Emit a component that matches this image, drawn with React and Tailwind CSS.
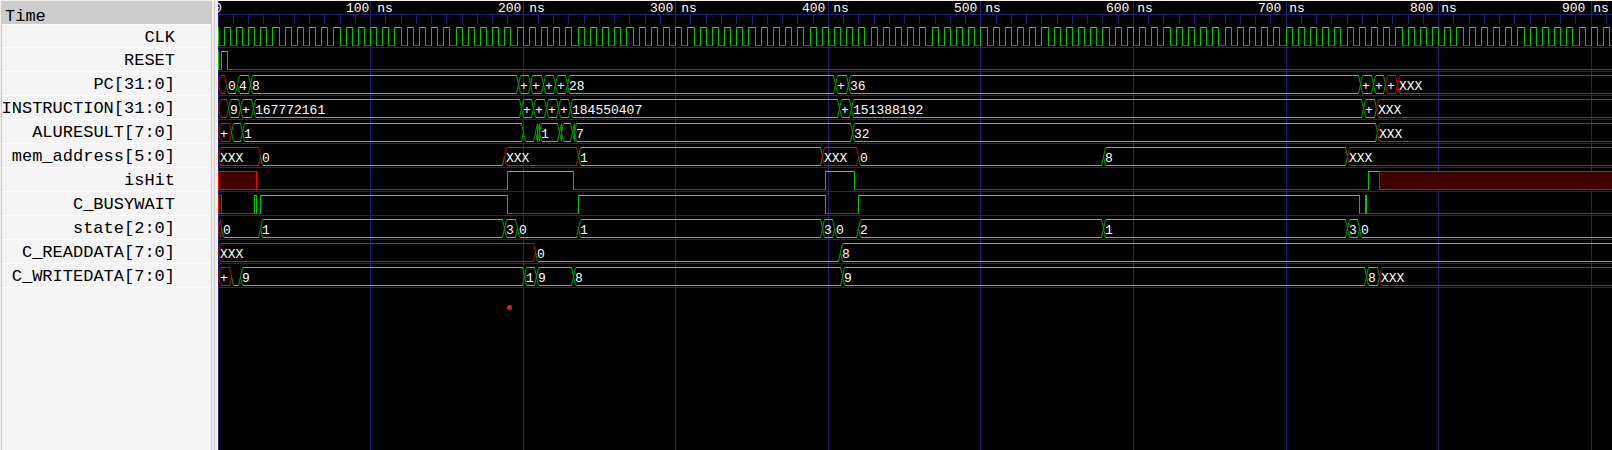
import React from "react";

const FAR = 4000;
const NS = 1.5258;
const EDGE = { g: "#00a000", r: "#d00000" };
const FLAT = { g: "#00ff00", r: "#ff0000" };
const GRID = "#202078";

// Each bus step: [x, value, label]; z = all bits zero, v = any value, x = unknown
const signals = [
  { name: "CLK", kind: "clock" },
  { name: "RESET", kind: "bit", steps: [[0, 1], [0, 0], [3, 1], [9, 0]] },
  {
    name: "PC[31:0]", kind: "bus",
    steps: [[0, "x"], [8, "z", "0"], [19, "v", "4"], [32, "v", "8"], [300, "v", "+"], [312, "v", "+"], [325, "v", "+"], [337, "v", "+"], [349, "v", "28"], [617, "v", "+"], [630, "v", "36"], [1142, "v", "+"], [1155, "v", "+"], [1167, "x", "+"], [1179, "x", "XXX"]],
  },
  {
    name: "INSTRUCTION[31:0]", kind: "bus",
    steps: [[0, "x"], [10, "v", "9"], [22, "v", "+"], [35, "v", "167772161"], [303, "v", "+"], [315, "v", "+"], [328, "v", "+"], [340, "v", "+"], [352, "v", "184550407"], [621, "v", "+"], [633, "v", "151388192"], [1145, "v", "+"], [1158, "x", "XXX"]],
  },
  {
    name: "ALURESULT[7:0]", kind: "bus",
    steps: [[0, "x", "+"], [13, "v"], [24, "v", "1"], [305, "z"], [317, "v"], [319, "v"], [321, "v", "1"], [341, "v"], [343, "v"], [354, "v"], [356, "v", "7"], [634, "v", "32"], [1159, "x", "XXX"]],
  },
  {
    name: "mem_address[5:0]", kind: "bus",
    steps: [[0, "x", "XXX"], [42, "z", "0"], [286, "x", "XXX"], [360, "v", "1"], [604, "x", "XXX"], [640, "z", "0"], [885, "v", "8"], [1129, "x", "XXX"]],
  },
  { name: "isHit", kind: "bit", steps: [[0, "x"], [38, 0], [289, 1], [355, 0], [607, 1], [636, 0], [1150, 1], [1161, "x"]] },
  { name: "C_BUSYWAIT", kind: "bit", steps: [[0, "x"], [3, 0], [36, 1], [38, 0], [42, 1], [289, 0], [360, 1], [607, 0], [640, 1], [1141, 0], [1147, 1], [1148, 0]] },
  {
    name: "state[2:0]", kind: "bus",
    steps: [[0, "x"], [3, "z", "0"], [42, "v", "1"], [286, "v", "3"], [299, "z", "0"], [360, "v", "1"], [604, "v", "3"], [616, "z", "0"], [640, "v", "2"], [885, "v", "1"], [1129, "v", "3"], [1141, "z", "0"]],
  },
  { name: "C_READDATA[7:0]", kind: "bus", steps: [[0, "x", "XXX"], [317, "z", "0"], [622, "v", "8"]] },
  {
    name: "C_WRITEDATA[7:0]", kind: "bus",
    steps: [[0, "x", "+"], [13, "z"], [22, "v", "9"], [306, "v", "1"], [318, "v", "9"], [355, "v", "8"], [624, "v", "9"], [1148, "v", "8"], [1161, "x", "XXX"]],
  },
];

function Line({ x1, y1, x2, y2, color, soft }) {
  return <line x1={x1} y1={y1} x2={x2} y2={y2} stroke={color} shapeRendering={soft ? "auto" : "crispEdges"} />;
}

const TOP = 3.5;
const MID = 12.5;
const BOTTOM = 21.5;

function BitWave({ steps }) {
  return steps.map(([from, value], i) => {
    const x = from + 0.5;
    const end = (i + 1 < steps.length ? steps[i + 1][0] : FAR) + 0.5;
    if (value === "x") {
      const fill = end - x > 5 ? "#400000" : "none";
      return <rect key={i} x={x} y={TOP} width={end - x} height={18} fill={fill} stroke="#ff0000" shapeRendering="crispEdges" />;
    }
    const y = value ? TOP : BOTTOM;
    const afterUnknown = i > 0 && steps[i - 1][1] === "x";
    return (
      <g key={i}>
        <Line x1={x} y1={y} x2={end} y2={y} color={value ? "#00ff00" : "#008000"} />
        {!afterUnknown && <Line x1={x} y1={3} x2={x} y2={22} color="#00c800" />}
      </g>
    );
  });
}

function ClockWave() {
  const steps = [[0, 0]];
  for (let t = 4; t * NS < FAR; t += 4) {
    steps.push([Math.floor(t * NS), (t / 4) % 2]);
  }
  return <BitWave steps={steps} />;
}

function BusWave({ steps }) {
  return steps.map(([from, value, label], i) => {
    const next = steps[i + 1];
    const x = from + 0.5;
    const end = (next ? next[0] : FAR) + 0.5;
    const left = x + 2;
    const right = Math.max(end - 2, left);
    const tone = value === "x" ? "r" : "g";
    const edge = EDGE[tone];
    return (
      <g key={i}>
        <Line x1={left} y1={BOTTOM} x2={right} y2={BOTTOM} color={FLAT[tone]} />
        <Line soft x1={x} y1={MID} x2={left} y2={BOTTOM} color={edge} />
        {next && <Line soft x1={right} y1={BOTTOM} x2={end} y2={MID} color={edge} />}
        {value !== "z" && (
          <>
            <Line x1={left} y1={TOP} x2={right} y2={TOP} color={FLAT[tone]} />
            <Line soft x1={x} y1={MID} x2={left} y2={TOP} color={edge} />
            {next && <Line soft x1={right} y1={TOP} x2={end} y2={MID} color={edge} />}
          </>
        )}
        {label && <text x={from + 2} y={18} fill="#ffffff">{label}</text>}
      </g>
    );
  });
}

function Wave({ signal }) {
  if (signal.kind === "clock") return <ClockWave />;
  if (signal.kind === "bit") return <BitWave steps={signal.steps} />;
  return <BusWave steps={signal.steps} />;
}

function Ruler() {
  const ticks = Array.from({ length: 250 }, (_, i) => i);
  return (
    <g stroke={GRID} shapeRendering="crispEdges">
      <line x1={0} y1={13.5} x2={FAR} y2={13.5} />
      {ticks.map((i) => {
        const x = Math.floor(i * 10 * NS) + 0.5;
        return <line key={i} x1={x} y1={i % 10 ? 13 : 0} x2={x} y2={i % 10 ? 23 : "100%"} />;
      })}
    </g>
  );
}

export default function App() {
  const hundreds = Array.from({ length: 9 }, (_, i) => i + 1);
  return (
    <main className="flex min-h-screen bg-[#f1eeec] pt-px pl-px">
      <section aria-label="Signals" className="mr-0.5 w-[211px] shrink-0 border-x border-[#d0cccb] bg-[#f4f4f4] font-['Liberation_Mono',monospace] text-[17px] text-black">
        <h1 className="flex h-[23px] items-end bg-[#cccccc] pl-[3px] leading-[15px]">Time</h1>
        <ul className="border-t border-white">
          {signals.map((s) => (
            <li key={s.name} className="flex h-6 items-center justify-end border-b border-white pt-[3px] pr-9 leading-5 first:h-[23px]">
              {s.name}
            </li>
          ))}
        </ul>
      </section>
      <section aria-label="Waves" className="flex min-w-0 flex-1 border-l border-[#d0cccb] pl-[3px]">
        <svg className="min-h-full w-full flex-1 bg-black font-['Liberation_Mono',monospace] text-[13px]">
          <Ruler />
          {signals.map((s, i) => (
            <g key={s.name} transform={`translate(0 ${23 + i * 24})`}>
              <line x1={0} y1={23.5} x2={FAR} y2={23.5} stroke={GRID} shapeRendering="crispEdges" />
              <Wave signal={s} />
            </g>
          ))}
          <text x={-4} y={11} fill="#ffffff">0</text>
          {hundreds.map((n) => (
            <text key={n} x={n * 152 - 24} y={11} fill="#ffffff">{n * 100} ns</text>
          ))}
          <circle cx={291.5} cy={306.5} r={2.5} fill="#ed1c24" />
        </svg>
      </section>
    </main>
  );
}
